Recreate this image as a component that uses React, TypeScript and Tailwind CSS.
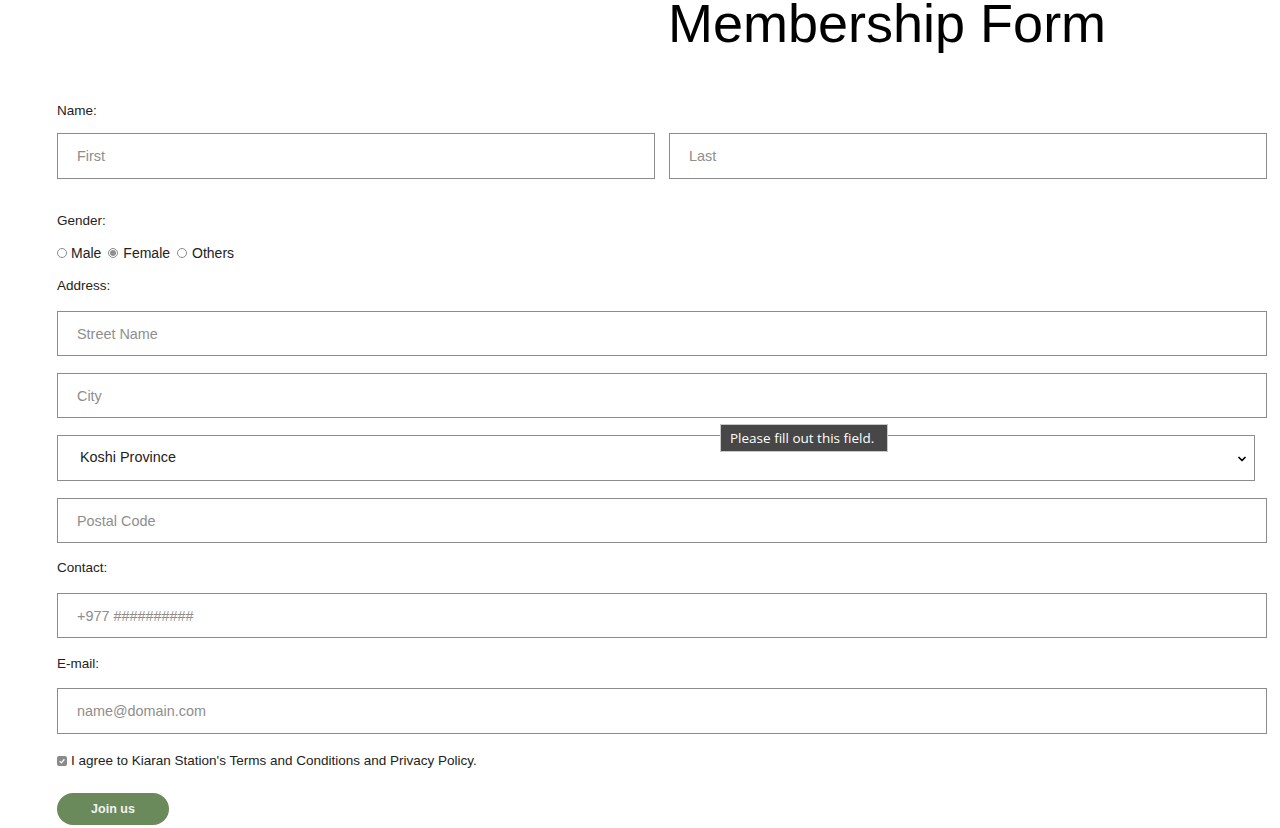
import { ChevronDown } from "lucide-react";

const inputClass =
  "block w-full h-[45px] border border-[#8c8c8c] bg-white px-[19px] text-[14.4px] text-[#222] placeholder:text-[#8e8e8e] outline-none";

function Radio({ checked }: { checked?: boolean }) {
  return (
    <span className="relative inline-flex h-[10px] w-[10px] items-center justify-center rounded-full border border-[#8a8a8a] bg-white">
      {checked && <span className="h-[6px] w-[6px] rounded-full bg-[#8f8f8f]" />}
    </span>
  );
}

export default function App() {
  return (
    <div className="min-h-[828px] bg-white font-['Liberation_Sans',Arial,sans-serif] text-[#222]">
      {/* Title */}
      <h1 className="ml-[668px] text-[54px] leading-[46px] font-normal text-black">Membership Form</h1>

      <form className="px-[57px] pr-[13px]" onSubmit={(e) => e.preventDefault()}>
        {/* Name */}
        <p className="mt-[57px] text-[13.5px] leading-[16px]">Name:</p>
        <div className="mt-[14px] flex gap-[14px]">
          <input className={inputClass + " h-[46px]"} placeholder="First" />
          <input className={inputClass + " h-[46px]"} placeholder="Last" />
        </div>

        {/* Gender */}
        <p className="mt-[34px] text-[13.5px] leading-[16px]">Gender:</p>
        <div className="mt-[16px] flex items-center gap-[7px] text-[14px] leading-[16px]">
          <span className="inline-flex items-center gap-[4px]">
            <Radio /> Male
          </span>
          <span className="inline-flex items-center gap-[5px]">
            <Radio checked /> Female
          </span>
          <span className="inline-flex items-center gap-[5px]">
            <Radio /> Others
          </span>
        </div>

        {/* Address */}
        <p className="mt-[17px] text-[13.5px] leading-[16px]">Address:</p>
        <input className={inputClass + " mt-[17px]"} placeholder="Street Name" />
        <input className={inputClass + " mt-[17px]"} placeholder="City" />
        <div className="relative mt-[17px] pr-[12px]">
          <div className="relative">
            <select className="block h-[46px] w-full appearance-none border border-[#8c8c8c] bg-white pl-[22px] text-[14.4px] text-[#222] outline-none">
              <option>Koshi Province</option>
              <option>Madhesh Province</option>
              <option>Bagmati Province</option>
              <option>Gandaki Province</option>
              <option>Lumbini Province</option>
              <option>Karnali Province</option>
              <option>Sudurpashchim Province</option>
            </select>
            <ChevronDown
              className="pointer-events-none absolute right-[7px] top-[18px] h-[12px] w-[12px] text-black"
              strokeWidth={3.5}
            />
          </div>
          {/* validation bubble */}
          <div className="absolute left-[663px] top-[-11px] flex h-[28px] w-[168px] items-center border border-[#c8c8c8] bg-[#474747] pl-[9px] font-['Open_Sans',sans-serif] text-[13.5px] whitespace-nowrap text-white">
            Please fill out this field.
          </div>
        </div>
        <input className={inputClass + " mt-[17px]"} placeholder="Postal Code" />

        {/* Contact */}
        <p className="mt-[17px] text-[13.5px] leading-[16px]">Contact:</p>
        <input className={inputClass + " mt-[17px]"} placeholder="+977 ##########" />

        {/* Email */}
        <p className="mt-[18px] text-[13.5px] leading-[16px]">E-mail:</p>
        <input className={inputClass + " mt-[16px] h-[46px]"} placeholder="name@domain.com" />

        {/* Terms */}
        <div className="mt-[19px] flex items-center gap-[4px] text-[13.5px] leading-[16px]">
          <span className="inline-flex h-[10px] w-[10px] items-center justify-center rounded-[2px] bg-[#8a8a8a]">
            <svg viewBox="0 0 10 10" className="h-[8px] w-[8px]">
              <path d="M2 5.2 L4.2 7.3 L8 2.8" fill="none" stroke="white" strokeWidth="1.6" />
            </svg>
          </span>
          <span>I agree to Kiaran Station's Terms and Conditions and Privacy Policy.</span>
        </div>

        <button
          type="submit"
          className="mt-[24px] h-[32px] w-[112px] rounded-full bg-[#6b8a5c] text-[12.5px] font-bold text-[#f2f2f2]"
        >
          Join us
        </button>
      </form>
    </div>
  );
}
